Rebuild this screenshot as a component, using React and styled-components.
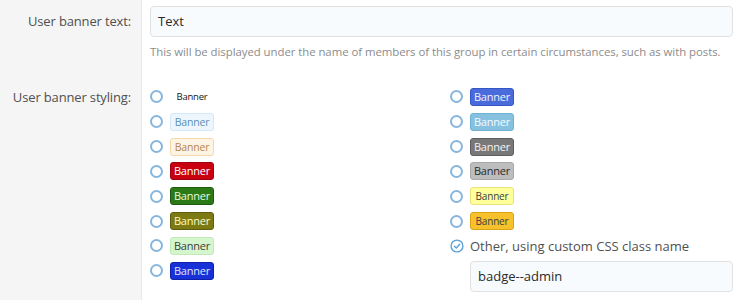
import React from 'react';
import styled, { createGlobalStyle } from 'styled-components';

const GlobalStyle = createGlobalStyle`
  html, body {
    margin: 0;
    padding: 0;
    background: #fff;
  }
  body {
    font-family: 'Open Sans', 'Noto Sans', sans-serif;
    color: #141414;
  }
`;

const Form = styled.div`
  width: 741px;
  height: 300px;
  overflow: hidden;
  background: linear-gradient(to right, #f5f5f5 0, #f5f5f5 141px, #e9e9e9 141px, #e9e9e9 142px, #fff 142px);
`;

const Row = styled.div`
  display: grid;
  grid-template-columns: 142px 1fr;
  padding-top: ${p => p.top}px;
  height: ${p => p.height}px;
  box-sizing: border-box;
`;

const Label = styled.div`
  text-align: right;
  padding-right: 11px;
  font-size: 13px;
  color: #505050;
  line-height: ${p => p.lh}px;
  letter-spacing: -0.15px;
`;

const Field = styled.div`
  padding: 0 8px 0 8px;
`;

const TextInput = styled.div`
  height: 31px;
  box-sizing: border-box;
  border: 1px solid #e1e1e1;
  border-radius: 4px;
  background: #f8fbfe;
  padding: 0 7px;
  font-size: 13px;
  line-height: 29px;
  color: #2a2a2a;
`;

const Explain = styled.div`
  font-size: 11.4px;
  color: #8c8c8c;
  margin-top: 7px;
  letter-spacing: -0.05px;
`;

const Choices = styled.div`
  display: grid;
  grid-template-columns: 300px 1fr;
`;

const Column = styled.div`
  display: flex;
  flex-direction: column;
`;

const Option = styled.div`
  display: flex;
  align-items: center;
  height: 24.85px;
  gap: 7px;
`;

const Radio = styled.span`
  width: 13px;
  height: 13px;
  box-sizing: border-box;
  border: 2px solid #86b6de;
  border-radius: 50%;
  flex: none;
`;

const Check = styled.svg`
  width: 14px;
  height: 14px;
  flex: none;
  margin-left: -0.5px;
  margin-right: -0.5px;
`;

const Banner = styled.span`
  display: inline-block;
  box-sizing: border-box;
  width: 44px;
  height: 18px;
  border-radius: 3px;
  border: 1px solid ${p => p.border || 'transparent'};
  background: ${p => p.bg || 'transparent'};
  color: ${p => p.color};
  font-size: ${p => p.size || 11}px;
  line-height: 16px;
  text-align: center;
  font-family: 'Open Sans', sans-serif;
  letter-spacing: -0.2px;
`;

const OtherText = styled.span`
  font-size: 13px;
  color: #505050;
`;

const OtherInput = styled.div`
  padding-left: 20px;
  margin-top: 3px;
`;

const left = [
  { color: '#141414', size: 9.5 },
  { bg: '#edf6fd', border: '#d3e8f9', color: '#5a8fb8', size: 10.5 },
  { bg: '#fef4e3', border: '#f6d8a8', color: '#b7864a', size: 10.5 },
  { bg: '#c8000f', border: '#a00010', color: '#fff' },
  { bg: '#2c7a16', border: '#1f5c10', color: '#e8f8e0' },
  { bg: '#7d7a14', border: '#5e5c10', color: '#fdfbc8' },
  { bg: '#d5f5cc', border: '#c2e9b8', color: '#404040' },
  { bg: '#1730d8', border: '#1020a8', color: '#e0e4ff' },
];

const right = [
  { bg: '#4a6bdc', border: '#3656c4', color: '#f0f4ff' },
  { bg: '#86c2e0', border: '#6fb0d3', color: '#f4fbff' },
  { bg: '#787878', border: '#5e5e5e', color: '#f4f4f4' },
  { bg: '#bdbdbd', border: '#a8a8a8', color: '#2b2b2b' },
  { bg: '#ffff9c', border: '#e8e47a', color: '#404040', size: 10 },
  { bg: '#f6c12c', border: '#d9a514', color: '#404040', size: 10 },
];

const CheckedRadio = () => (
  <Check viewBox="0 0 14 14">
    <circle cx="7" cy="7" r="5.9" fill="none" stroke="#5aa0d8" strokeWidth="1.4" />
    <path d="M4.4 7.2 L6.3 9 L9.7 5.3" fill="none" stroke="#5aa0d8" strokeWidth="1.4" strokeLinecap="round" strokeLinejoin="round" />
  </Check>
);

const App = () => (
  <>
    <GlobalStyle />
    <Form>
      <Row top={6} height={72}>
        <Label lh={31}>User banner text:</Label>
        <Field>
          <TextInput>Text</TextInput>
          <Explain>This will be displayed under the name of members of this group in certain circumstances, such as with posts.</Explain>
        </Field>
      </Row>
      <Row top={12.5} height={228}>
        <Label lh={24.85}>User banner styling:</Label>
        <Field>
          <Choices>
            <Column>
              {left.map((b, i) => (
                <Option key={i}>
                  <Radio />
                  <Banner {...b}>Banner</Banner>
                </Option>
              ))}
            </Column>
            <Column>
              {right.map((b, i) => (
                <Option key={i}>
                  <Radio />
                  <Banner {...b}>Banner</Banner>
                </Option>
              ))}
              <Option>
                <CheckedRadio />
                <OtherText>Other, using custom CSS class name</OtherText>
              </Option>
              <OtherInput>
                <TextInput>badge--admin</TextInput>
              </OtherInput>
            </Column>
          </Choices>
        </Field>
      </Row>
    </Form>
  </>
);

export default App;
